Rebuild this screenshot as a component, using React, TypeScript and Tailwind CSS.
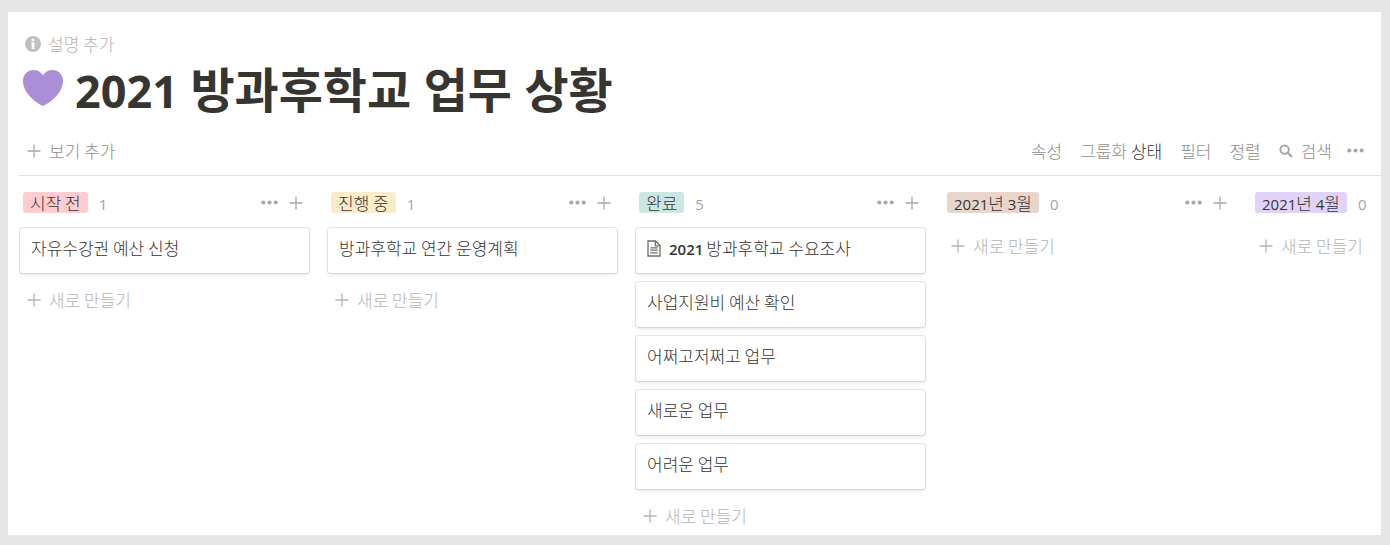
import React from 'react';

interface Card {
  title: string;
  bold?: string;
  hasPage?: boolean;
}

interface Column {
  name: string;
  tagClass: string;
  cards: Card[];
}

const columns: Column[] = [
  { name: '시작 전', tagClass: 'bg-[#ffccd1]', cards: [{ title: '자유수강권 예산 신청' }] },
  { name: '진행 중', tagClass: 'bg-[#fbecc9]', cards: [{ title: '방과후학교 연간 운영계획' }] },
  {
    name: '완료',
    tagClass: 'bg-[#cce7e1]',
    cards: [
      { bold: '2021', title: '방과후학교 수요조사', hasPage: true },
      { title: '사업지원비 예산 확인' },
      { title: '어쩌고저쩌고 업무' },
      { title: '새로운 업무' },
      { title: '어려운 업무' },
    ],
  },
  { name: '2021년 3월', tagClass: 'bg-[#e8d5cc]', cards: [] },
  { name: '2021년 4월', tagClass: 'bg-[#e1d3f8]', cards: [] },
];

// Digits are set in a Latin face, a bit smaller than the Hangul around them
const Label = ({ text, digitClass = 'font-normal' }: { text: string; digitClass?: string }) => (
  <>
    {text.split(/(\d+)/).filter(Boolean).map((part, i) =>
      /\d/.test(part) ? (
        <span key={i} className={`font-['Open_Sans',sans-serif] text-[15px] leading-none ${digitClass}`}>{part}</span>
      ) : (
        part
      )
    )}
  </>
);

const PlusIcon = ({ className = '' }: { className?: string }) => (
  <svg viewBox="0 0 14 14" className={`w-[14px] h-[14px] shrink-0 ${className}`} fill="none" stroke="currentColor" strokeWidth="1.3">
    <path d="M7 0.5V13.5M0.5 7H13.5" />
  </svg>
);

const DotsIcon = () => (
  <svg viewBox="0 0 17 5" className="w-[17px] h-[5px] shrink-0" fill="currentColor">
    <circle cx="2.3" cy="2.5" r="2.1" />
    <circle cx="8.5" cy="2.5" r="2.1" />
    <circle cx="14.7" cy="2.5" r="2.1" />
  </svg>
);

const InfoIcon = () => (
  <svg viewBox="0 0 16 16" className="w-4 h-4 shrink-0">
    <circle cx="8" cy="8" r="8" fill="#c1c0be" />
    <circle cx="8" cy="3.9" r="1.4" fill="#fff" />
    <path d="M6.2 6.2H9.3V12.9H6.7V7.6H6.2Z" fill="#fff" />
  </svg>
);

const HeartIcon = () => (
  <svg viewBox="0 0 40 36" className="w-10 h-9 shrink-0">
    <path
      d="M20 5.2C17.8 1.8 14.3 0 10.6 0C4.6 0 0 4.7 0 10.8C0 22.5 11.3 32 20 36C28.7 32 40 22.5 40 10.8C40 4.7 35.4 0 29.4 0C25.7 0 22.2 1.8 20 5.2Z"
      fill="#aa8ed6"
    />
  </svg>
);

const SearchIcon = () => (
  <svg viewBox="0 0 14 14" className="w-[14px] h-[14px] shrink-0 text-[#a9a8a5]" fill="none" stroke="currentColor">
    <circle cx="5.6" cy="5.6" r="4.2" strokeWidth="2" />
    <path d="M8.8 8.8L13 13" strokeWidth="2.2" />
  </svg>
);

const PageIcon = () => (
  <svg viewBox="0 0 14 17" className="w-[14px] h-[17px] shrink-0" fill="none" stroke="#6f6e69" strokeWidth="1.3">
    <path d="M1 1H8.6L13 5.6V16H1Z" />
    <path d="M8.4 1V5.8H13" />
    <path d="M3.2 7.8H10.8M3.2 10.2H10.8M3.2 12.8H10.8" />
  </svg>
);

const BoardColumn: React.FC<{ column: Column }> = ({ column }) => (
  <section className="w-[289px] shrink-0">
    <header className="flex items-center h-[21px] pl-[3px] pr-[6px]">
      <h2 className={`px-[7px] rounded-[3px] leading-[21px] h-[21px] ${column.tagClass}`}>
        <Label text={column.name} />
      </h2>
      <span className="ml-[11px] leading-[21px] text-[#a5a4a1]">
        <Label text={String(column.cards.length)} />
      </span>
      <div className="ml-auto flex items-center gap-[11px] text-[#a9a8a5]">
        <button type="button" aria-label="더 보기"><DotsIcon /></button>
        <button type="button" aria-label="추가"><PlusIcon /></button>
      </div>
    </header>

    <div className="mt-[15px] flex flex-col gap-[9px]">
      {column.cards.map((card) => (
        <a
          key={card.title}
          href="#"
          className="flex items-start h-[45px] px-[11px] pt-2 rounded-[3px] bg-white shadow-[0_0_0_1px_rgba(15,15,15,0.1),0_2px_4px_rgba(15,15,15,0.1)]"
        >
          <span className="flex items-center leading-6">
            {card.hasPage && <PageIcon />}
            {card.bold && (
              <span className="ml-2 mr-[3px]">
                <Label text={card.bold} digitClass="font-semibold" />
              </span>
            )}
            {card.title}
          </span>
        </a>
      ))}
      <button type="button" className="flex items-center gap-2 h-9 pl-[7px] text-[#b5b4b1]">
        <PlusIcon />
        새로 만들기
      </button>
    </div>
  </section>
);

export default function App() {
  return (
    <div className="bg-[#e6e6e6] pt-3 pl-2 pr-[9px] pb-[10px] font-['Noto_Sans_CJK_KR',sans-serif] text-[17px] leading-6 font-light text-[#37352f]">
      <main className="bg-white pt-5 pl-[11px] overflow-hidden">
        <button type="button" className="flex items-center gap-[7px] h-6 ml-[6px] text-[#b5b4b1]">
          <InfoIcon />
          설명 추가
        </button>

        <div className="flex items-center gap-3 h-16 mb-[6px] ml-1">
          <HeartIcon />
          <h1 className="pt-1 font-['Open_Sans','Noto_Sans_CJK_KR',sans-serif] text-[48px] leading-[64px] font-bold whitespace-nowrap">
            <span className="text-[45px] leading-none">2021</span> 방과후학교 업무 상황
          </h1>
        </div>

        {/* View toolbar */}
        <div className="flex items-center justify-between h-[50px] pl-2 pr-[17px] border-b border-[#e3e2e1] text-[#8f8e8a]">
          <button type="button" className="flex items-center gap-2">
            <PlusIcon className="text-[#a9a8a5]" />
            보기 추가
          </button>
          <div className="flex items-center gap-[15px]">
            <div className="flex items-center gap-[18px]">
              <button type="button">속성</button>
              <button type="button">
                그룹화 <span className="text-[#37352f]">상태</span>
              </button>
              <button type="button">필터</button>
              <button type="button">정렬</button>
              <button type="button" className="flex items-center gap-2">
                <SearchIcon />
                검색
              </button>
            </div>
            <button type="button" aria-label="더 보기" className="text-[#a9a8a5]"><DotsIcon /></button>
          </div>
        </div>

        <div className="flex gap-[19px] pt-4 pl-px pb-px overflow-hidden">
          {columns.map((column) => (
            <BoardColumn key={column.name} column={column} />
          ))}
        </div>
      </main>
    </div>
  );
}
